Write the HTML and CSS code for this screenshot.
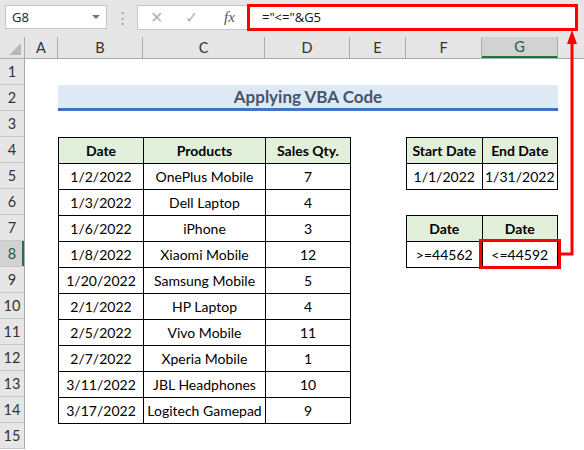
FILE: index.html
```html
<!DOCTYPE html>
<html lang="en">
<head>
  <meta charset="UTF-8" />
  <title>Applying VBA Code</title>
  <link rel="stylesheet" href="styles.css">
</head>
<body>
  <div class="app">
    <!-- formula bar -->
    <div class="toolbar">
      <div class="namebox"><span>G8</span><span class="caret"></span></div>
      <div class="grip">⋮</div>
      <div class="fbuttons">
        <span class="fbtn">✕</span>
        <span class="fbtn">✓</span>
        <span class="fx">fx</span>
      </div>
      <div class="formula">="&lt;="&amp;G5</div>
    </div>

    <!-- column headers -->
    <div class="colheads">
      <div class="corner"><span class="tri"></span></div>
      <div class="ch w-a">A</div>
      <div class="ch w-b">B</div>
      <div class="ch w-c">C</div>
      <div class="ch w-d">D</div>
      <div class="ch w-e">E</div>
      <div class="ch w-f">F</div>
      <div class="ch w-g sel">G</div>
      <div class="ch w-h"></div>
    </div>

    <div class="body">
      <div class="rowheads">
        <div class="rh">1</div><div class="rh">2</div><div class="rh">3</div>
        <div class="rh">4</div><div class="rh">5</div><div class="rh">6</div>
        <div class="rh">7</div><div class="rh sel">8</div><div class="rh">9</div>
        <div class="rh">10</div><div class="rh">11</div><div class="rh">12</div>
        <div class="rh">13</div><div class="rh">14</div><div class="rh">15</div>
      </div>

      <div class="sheet">
        <div class="title">Applying VBA Code</div>

        <table class="data sales">
          <colgroup><col class="w-b"><col class="w-c"><col class="w-d"></colgroup>
          <tr><th>Date</th><th>Products</th><th>Sales Qty.</th></tr>
          <tr><td>1/2/2022</td><td>OnePlus Mobile</td><td>7</td></tr>
          <tr><td>1/3/2022</td><td>Dell Laptop</td><td>4</td></tr>
          <tr><td>1/6/2022</td><td>iPhone</td><td>3</td></tr>
          <tr><td>1/8/2022</td><td>Xiaomi Mobile</td><td>12</td></tr>
          <tr><td>1/20/2022</td><td>Samsung Mobile</td><td>5</td></tr>
          <tr><td>2/1/2022</td><td>HP Laptop</td><td>4</td></tr>
          <tr><td>2/5/2022</td><td>Vivo Mobile</td><td>11</td></tr>
          <tr><td>2/7/2022</td><td>Xperia Mobile</td><td>1</td></tr>
          <tr><td>3/11/2022</td><td>JBL Headphones</td><td>10</td></tr>
          <tr><td>3/17/2022</td><td>Logitech Gamepad</td><td>9</td></tr>
        </table>

        <table class="data range">
          <tr><th>Start Date</th><th>End Date</th></tr>
          <tr><td>1/1/2022</td><td>1/31/2022</td></tr>
        </table>

        <table class="data crit">
          <tr><th>Date</th><th>Date</th></tr>
          <tr><td>&gt;=44562</td><td>&lt;=44592</td></tr>
        </table>
      </div>
    </div>

    <!-- callout: selected cell and arrow to formula -->
    <div class="cellmark"></div>
    <svg class="arrow" width="584" height="450" viewBox="0 0 584 450">
      <polyline points="560,254 572,254 572,40" fill="none" stroke="#ff0000" stroke-width="3"/>
      <polygon points="572,30 567,44 577,44" fill="#ff0000"/>
    </svg>
  </div>
</body>
</html>
```

FILE: styles.css
```css
* { box-sizing: border-box; }
body {
  margin: 0;
  background: #fff;
  font-family: Lato, "Noto Sans", sans-serif;
  color: #000;
}
.app {
  position: relative;
  width: 584px;
  height: 450px;
  overflow: hidden;
}

/* formula bar */
.toolbar {
  display: flex;
  align-items: center;
  height: 37px;
  background: #e6e6e6;
  padding: 2px 6px 5px 5px;
}
.namebox {
  display: flex;
  align-items: center;
  justify-content: space-between;
  width: 102px;
  height: 24px;
  background: #fff;
  border: 1px solid #c6c6c6;
  padding: 0 6px 0 6px;
  font-family: "Open Sans", sans-serif;
  font-size: 13px;
  color: #222;
}
.caret {
  width: 0;
  height: 0;
  border-left: 4px solid transparent;
  border-right: 4px solid transparent;
  border-top: 4px solid #777;
}
.grip {
  width: 30px;
  text-align: center;
  color: #9a9a9a;
  font-size: 15px;
}
.fbuttons {
  display: flex;
  align-items: center;
  width: 110px;
  height: 25px;
  background: #fff;
  border: 1px solid #c6c6c6;
  border-right: none;
  padding-left: 12px;
}
.fbtn {
  width: 35px;
  color: #b3b3b3;
  font-size: 16px;
}
.fx {
  margin-left: 4px;
  font-family: "Liberation Serif", serif;
  font-style: italic;
  font-size: 15px;
  color: #555;
}
.formula {
  flex: 1;
  height: 27px;
  background: #fff;
  border: 3px solid #ff0000;
  padding: 1px 0 0 12px;
  font-family: "Open Sans", sans-serif;
  font-size: 13px;
  color: #111;
  line-height: 19px;
}

/* column headers */
.colheads {
  display: flex;
  height: 22px;
  background: #e6e6e6;
  border-bottom: 1px solid #ababab;
}
.corner {
  position: relative;
  width: 25px;
  border-right: 1px solid #ababab;
}
.tri {
  position: absolute;
  right: 3px;
  bottom: 3px;
  width: 0;
  height: 0;
  border-left: 12px solid transparent;
  border-bottom: 12px solid #b9b9b9;
}
.ch {
  display: flex;
  align-items: center;
  justify-content: center;
  border-right: 1px solid #ababab;
  font-size: 14.5px;
  color: #333;
}
.ch.sel {
  background: #d2d2d2;
  border-bottom: 2px solid #217346;
  color: #1e5e3b;
}
.ch.w-h { flex: 1; border-right: none; }
.w-a { width: 33px; }
.w-b { width: 85px; }
.w-c { width: 122px; }
.w-d { width: 85px; }
.w-e { width: 56px; }
.w-f { width: 76px; }
.w-g { width: 76px; }

/* body */
.body { display: flex; }
.rowheads {
  width: 25px;
  background: #e6e6e6;
  border-right: 1px solid #ababab;
}
.rh {
  display: flex;
  align-items: center;
  justify-content: center;
  height: 26px;
  border-bottom: 1px solid #c9c9c9;
  font-size: 14.5px;
  color: #333;
}
.rh.sel {
  background: #d2d2d2;
  color: #1e5e3b;
  box-shadow: inset -2px 0 0 #217346;
}

.sheet {
  flex: 1;
  display: grid;
  grid-template-columns: 33px 85px 122px 85px 56px 76px 76px 1fr;
  grid-template-rows: repeat(15, 26px);
}
.title {
  grid-column: 2 / 8;
  grid-row: 2;
  background: #dde9f5;
  border-bottom: 3px solid #4472c4;
  text-align: center;
  font-weight: bold;
  font-size: 17px;
  line-height: 23px;
  color: #44546a;
}

.data {
  border-collapse: collapse;
  table-layout: fixed;
  width: 100%;
  height: 100%;
  font-size: 14px;
}
.data th, .data td {
  border: 1px solid #000;
  padding: 0;
  text-align: center;
  height: 26px;
  white-space: nowrap;
}
.data th {
  background: #e2efda;
  font-weight: bold;
}
.sales { grid-column: 2 / 5; grid-row: 4 / 15; }
.range { grid-column: 6 / 8; grid-row: 4 / 6; }
.crit  { grid-column: 6 / 8; grid-row: 7 / 9; }

/* callout overlay */
.cellmark {
  position: absolute;
  left: 479px;
  top: 239px;
  width: 82px;
  height: 30px;
  border: 3px solid #ff0000;
}
.arrow {
  position: absolute;
  left: 0;
  top: 0;
  pointer-events: none;
}
```
